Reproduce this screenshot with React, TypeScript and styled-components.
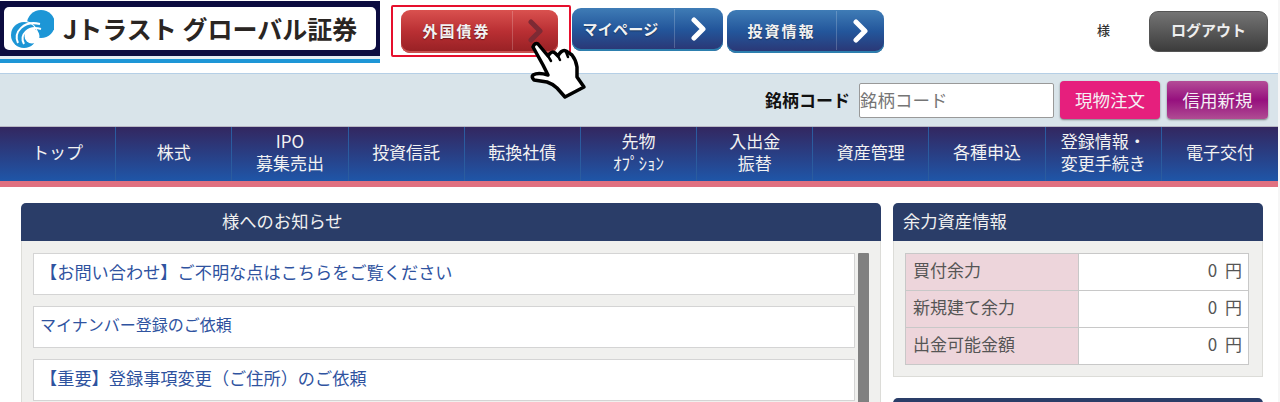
import React from 'react';
import styled, { createGlobalStyle, css } from 'styled-components';

const FONT = '"Noto Sans CJK JP", "Noto Sans", sans-serif';

const GlobalStyle = createGlobalStyle`
  html, body {
    margin: 0;
    padding: 0;
    background: #fff;
    overflow: hidden;
  }
  body {
    font-family: ${FONT};
  }
  * {
    box-sizing: border-box;
  }
`;

const Page = styled.div`
  width: 1280px;
  height: 402px;
  overflow: hidden;
  border-right: 2px solid #f6f6f6;
`;

const Header = styled.header`
  display: flex;
  align-items: flex-start;
  height: 73px;
  padding-right: 10px;
`;

const LogoBlock = styled.div`
  width: 380px;
  margin-top: 1px;
  margin-right: 11px;
  border-bottom: 4px solid #1e96d6;
`;

const LogoFrame = styled.div`
  height: 58px;
  padding: 6px 4px 6px;
  background: #0c0c40;
  border-bottom: 3px solid #e6edf3;
`;

const LogoPlate = styled.div`
  display: flex;
  align-items: center;
  height: 43px;
  padding-left: 6px;
  gap: 9px;
  background: #fff;
  border-radius: 5px;
`;

const LogoText = styled.span`
  color: #2a2522;
  font-size: 25px;
  font-weight: 700;
  line-height: 1;
  white-space: nowrap;
`;

const HighlightBox = styled.div`
  position: relative;
  width: 180px;
  height: 52px;
  margin-top: 5px;
  margin-right: 1px;
  padding: 3px 11px 0 8px;
  border: 2px solid #e60f2d;
  border-radius: 2px;
`;

const tones = {
  red: css`
    background: linear-gradient(#d9514f, #b92f33 50%, #962024);
    box-shadow: inset 0 -2px 0 #c8504f;
  `,
  blue: css`
    background: linear-gradient(#3f7cb6, #23569b 50%, #2b3573);
    box-shadow: inset 0 -2px 0 #2d7fae;
  `,
};

const LinkButton = styled.a<{ $tone: 'red' | 'blue'; $width: number; $top?: number; $after?: number }>`
  display: flex;
  align-items: stretch;
  width: ${(p) => p.$width}px;
  height: 43px;
  margin-top: ${(p) => p.$top ?? 0}px;
  margin-right: ${(p) => p.$after ?? 0}px;
  border-radius: 9px;
  color: #f2f2f2;
  ${(p) => tones[p.$tone]};
`;

const ButtonLabel = styled.span<{ $spacing: number; $shift?: number }>`
  flex: 1;
  display: flex;
  align-items: center;
  justify-content: center;
  padding-bottom: 2px;
  padding-right: ${(p) => p.$shift ?? 0}px;
  font-size: 15px;
  font-weight: 700;
  letter-spacing: ${(p) => p.$spacing}px;
  text-shadow: 0 1px 1px rgba(0, 0, 0, 0.4);
`;

const ButtonArrow = styled.span<{ $width: number }>`
  display: flex;
  align-items: center;
  justify-content: center;
  width: ${(p) => p.$width}px;
  margin: 1px 0 3px;
  border-left: 1px solid rgba(255, 255, 255, 0.2);
`;

const Hand = styled.svg`
  position: absolute;
  left: 132px;
  top: 31px;
  width: 65px;
  height: 65px;
`;

const Greeting = styled.span`
  margin-left: auto;
  margin-top: 20px;
  margin-right: 39px;
  color: #333;
  font-size: 13px;
  font-weight: 500;
  line-height: 20px;
`;

const LogoutButton = styled.a`
  display: flex;
  align-items: center;
  justify-content: center;
  width: 119px;
  height: 41px;
  margin-top: 11px;
  padding-bottom: 4px;
  border: 1px solid #555;
  border-radius: 9px;
  background: linear-gradient(#747474, #3c3c3c);
  color: #eee;
  font-size: 15px;
  font-weight: 700;
`;

const SearchBar = styled.div`
  display: flex;
  align-items: center;
  justify-content: flex-end;
  width: 1278px;
  height: 53px;
  padding-right: 10px;
  background: #d9e4ea;
  border-top: 1px solid #b5cfe6;
`;

const SearchLabel = styled.label`
  margin-right: 9px;
  color: #111;
  font-size: 17px;
  font-weight: 700;
  line-height: 24px;
  white-space: nowrap;
`;

const SearchInput = styled.input`
  width: 195px;
  height: 35px;
  margin-right: 6px;
  padding: 0 0 2px;
  border: 1px solid #999;
  border-radius: 2px;
  background: #fff;
  font-family: ${FONT};
  font-size: 17.5px;

  ::placeholder {
    color: #8a8a8a;
    opacity: 1;
  }
`;

const OrderButton = styled.a<{ $margin: boolean; $plum?: boolean }>`
  display: flex;
  align-items: center;
  justify-content: center;
  width: ${(p) => (p.$plum ? 101 : 100)}px;
  height: 38px;
  margin-right: ${(p) => (p.$margin ? 7 : 0)}px;
  padding-bottom: 2px;
  border-radius: 4px;
  color: #f4f0f4;
  font-size: 17.5px;
  box-shadow: 0 1px 2px rgba(0, 0, 0, 0.45);
  background: ${(p) =>
    p.$plum ? 'linear-gradient(#b44d97, #96107e 50%, #b04c93)' : '#e61f7d'};
`;

const Nav = styled.nav`
  display: grid;
  grid-template-columns: repeat(11, 1fr);
  width: 1278px;
  height: 61px;
  background: linear-gradient(#332760, #1f56a8);
  border-top: 1px solid #b8b8c4;
  border-bottom: 6px solid #e07080;
`;

const NavItem = styled.a`
  display: flex;
  align-items: center;
  justify-content: center;
  padding-bottom: 5px;
  color: #f2f2f2;
  font-size: 17px;
  line-height: 22px;
  text-align: center;
  white-space: pre-line;
  border-right: 1px solid #2b5c9f;

  &:last-child {
    border-right: 0;
  }
`;

const Content = styled.main`
  display: flex;
  align-items: flex-start;
  gap: 12px;
  padding: 16px 0 0 21px;
`;

const Side = styled.div`
  display: flex;
  flex-direction: column;
  gap: 21px;
`;

const Panel = styled.section<{ $width: number }>`
  width: ${(p) => p.$width}px;
`;

const PanelTitle = styled.h2<{ $indent: number }>`
  height: 38px;
  margin: 0;
  padding-left: ${(p) => p.$indent}px;
  border-radius: 5px 5px 0 0;
  background: #2a3d68;
  color: #f0f0f0;
  font-size: 17.3px;
  font-weight: 400;
  line-height: 36px;
`;

const PanelBody = styled.div`
  padding: 12px 11px 11px;
  border: 1px solid #dcdcd8;
  border-top: 0;
  background: #f0f0ee;
`;

const NoticeBody = styled(PanelBody)`
  display: flex;
  gap: 3px;
  height: 180px;
`;

const NoticeList = styled.ul`
  flex: 1;
  display: flex;
  flex-direction: column;
  gap: 11px;
  margin: 0;
  padding: 0;
  list-style: none;
`;

const Notice = styled.li<{ $size: number }>`
  height: 42px;
  padding-left: 6px;
  border: 1px solid #d4d4d4;
  background: #fff;
  color: #2f539f;
  font-size: ${(p) => p.$size}px;
  line-height: 35px;
  white-space: nowrap;
`;

const ScrollThumb = styled.div`
  width: 11px;
  border-radius: 1px 1px 0 0;
  background: #808080;
`;

const BalanceTable = styled.table`
  width: 344px;
  border-collapse: collapse;
  background: #fff;
  font-size: 17px;
  color: #555;
`;

const LabelCell = styled.th`
  width: 173px;
  height: 37px;
  padding: 0 0 5px 7px;
  border: 1px solid #c8c8c8;
  background: #edd5db;
  font-weight: 400;
  text-align: left;
  line-height: 30px;
`;

const ValueCell = styled.td`
  padding: 0 6px 5px 0;
  border: 1px solid #c8c8c8;
  line-height: 30px;
  text-align: right;
  word-spacing: 4px;
`;

const Chevron = ({ color }: { color: string }) => (
  <svg width="18" height="24" viewBox="0 0 18 24">
    <polyline
      points="4,3 13,12 4,21"
      fill="none"
      stroke={color}
      strokeWidth="5"
      strokeLinecap="round"
      strokeLinejoin="round"
    />
  </svg>
);

const LogoMark = () => (
  <svg width="44" height="42" viewBox="0 0 44 42">
    <circle cx="31" cy="16" r="14" fill="#1d96d6" />
    <circle cx="14" cy="27" r="14" fill="#fff" />
    <circle cx="14" cy="27" r="13" fill="#1d96d6" />
    <path d="M8 35 C3 24 14 12 30 16" fill="none" stroke="#fff" strokeWidth="2" />
    <path d="M14 36 C9 27 18 17 31 21" fill="none" stroke="#fff" strokeWidth="2" />
    <circle cx="22" cy="28" r="7.5" fill="#fff" />
  </svg>
);

const NAV_ITEMS = [
  'トップ',
  '株式',
  'IPO\n募集売出',
  '投資信託',
  '転換社債',
  '先物\nｵﾌﾟｼｮﾝ',
  '入出金\n振替',
  '資産管理',
  '各種申込',
  '登録情報・\n変更手続き',
  '電子交付',
];

const NOTICES = [
  { text: '【お問い合わせ】ご不明な点はこちらをご覧ください', size: 17.2 },
  { text: 'マイナンバー登録のご依頼', size: 16 },
  { text: '【重要】登録事項変更（ご住所）のご依頼', size: 17.2 },
];

const BALANCES = ['買付余力', '新規建て余力', '出金可能金額'];

const App = () => (
  <Page>
    <GlobalStyle />
    <Header>
      <LogoBlock>
        <LogoFrame>
          <LogoPlate>
            <LogoMark />
            <LogoText>Jトラスト グローバル証券</LogoText>
          </LogoPlate>
        </LogoFrame>
      </LogoBlock>
      <HighlightBox>
        <LinkButton $tone="red" $width={157}>
          <ButtonLabel $spacing={2}>外国債券</ButtonLabel>
          <ButtonArrow $width={46}>
            <Chevron color="#7d2a34" />
          </ButtonArrow>
        </LinkButton>
        <Hand viewBox="0 0 65 65">
          <path
            d="M8 9 Q10 4 13 6 L23 18 Q27 12 30 15 L33 18 Q37 11 41 13 L47 17 Q51 22 52 29 L52 39 L59 49 L40 59 L32 50 Q28 46 22 44 L9 42 Q6 39 8 37 Q13 34 23 37 L18 27 Z"
            fill="#fff"
            stroke="#000"
            strokeWidth="3.5"
            strokeLinejoin="round"
          />
          <path
            d="M23 18 L26 23 M33 18 L35 22 M41 14 L43 19"
            fill="none"
            stroke="#000"
            strokeWidth="2.5"
            strokeLinecap="round"
          />
        </Hand>
      </HighlightBox>
      <LinkButton $tone="blue" $width={151} $top={8} $after={4}>
        <ButtonLabel $spacing={0.3} $shift={5}>マイページ</ButtonLabel>
        <ButtonArrow $width={49}>
          <Chevron color="#fff" />
        </ButtonArrow>
      </LinkButton>
      <LinkButton $tone="blue" $width={157} $top={10}>
        <ButtonLabel $spacing={2}>投資情報</ButtonLabel>
        <ButtonArrow $width={48}>
          <Chevron color="#fff" />
        </ButtonArrow>
      </LinkButton>
      <Greeting>様</Greeting>
      <LogoutButton>ログアウト</LogoutButton>
    </Header>

    <SearchBar>
      <SearchLabel>銘柄コード</SearchLabel>
      <SearchInput placeholder="銘柄コード" />
      <OrderButton $margin>現物注文</OrderButton>
      <OrderButton $margin={false} $plum>信用新規</OrderButton>
    </SearchBar>

    <Nav>
      {NAV_ITEMS.map((item) => (
        <NavItem key={item}>{item}</NavItem>
      ))}
    </Nav>

    <Content>
      <Panel $width={860}>
        <PanelTitle $indent={201}>様へのお知らせ</PanelTitle>
        <NoticeBody>
          <NoticeList>
            {NOTICES.map((notice) => (
              <Notice key={notice.text} $size={notice.size}>{notice.text}</Notice>
            ))}
          </NoticeList>
          <ScrollThumb />
        </NoticeBody>
      </Panel>
      <Side>
        <Panel $width={370}>
          <PanelTitle $indent={10}>余力資産情報</PanelTitle>
          <PanelBody>
            <BalanceTable>
              <tbody>
                {BALANCES.map((label) => (
                  <tr key={label}>
                    <LabelCell>{label}</LabelCell>
                    <ValueCell>0 円</ValueCell>
                  </tr>
                ))}
              </tbody>
            </BalanceTable>
          </PanelBody>
        </Panel>
        <Panel $width={370}>
          <PanelTitle $indent={10} />
        </Panel>
      </Side>
    </Content>
  </Page>
);

export default App;
